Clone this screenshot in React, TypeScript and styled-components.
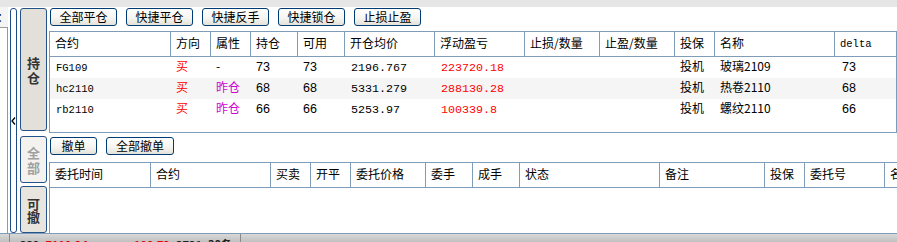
import React from 'react';
import styled, { createGlobalStyle } from 'styled-components';

const GlobalStyle = createGlobalStyle`
  html, body { margin: 0; padding: 0; background: #fff; overflow: hidden; }
  body {
    font-family: "Noto Sans CJK SC", "Liberation Sans", sans-serif;
    font-size: 12px;
    color: #000;
  }
`;

const CJK = `"Noto Sans CJK SC", "Liberation Sans", sans-serif`;
const MONO = `"Liberation Mono", "Noto Sans CJK SC", monospace`;
const SANS = `"Liberation Sans", "Noto Sans CJK SC", sans-serif`;
const GRID = '#7f9db9';

const Screen = styled.div`
  width: 897px;
  height: 242px;
  display: flex;
  flex-direction: column;
  overflow: hidden;
`;

const TopBand = styled.div`
  flex: none;
  height: 7px;
  background: #e6e6e6;
`;

const Body = styled.div`
  flex: none;
  height: 226px;
  display: flex;
`;

const LeftPanel = styled.div`
  flex: none;
  width: 8px;
  display: flex;
  flex-direction: column;
  overflow: hidden;
`;

const LeftLabel = styled.div`
  height: 20px;
  background: #f4f4f4;
  font-size: 12px;
  line-height: 20px;
  margin-left: -3px;
  white-space: nowrap;
`;

const LeftBox = styled.div`
  flex: 1;
  background: #fff;
  border-top: 1px solid #9a9a9a;
  border-right: 1px solid ${GRID};
`;

const Handle = styled.div`
  flex: none;
  width: 5px;
  margin: 1px 0 0 2px;
  height: 223px;
  border: 1px solid #1d4c86;
  border-radius: 3px;
  background: #fff;
  display: flex;
  align-items: center;
  justify-content: center;
`;

const Tabs = styled.div`
  flex: none;
  width: 27px;
  margin-left: 3px;
  padding-top: 1px;
  display: flex;
  flex-direction: column;
`;

const Tab = styled.div<{ $h: number; $gap: number; $bg: string; $fg: string }>`
  box-sizing: border-box;
  height: ${(p) => p.$h}px;
  margin-top: ${(p) => p.$gap}px;
  border: 1px solid #24528a;
  border-radius: 3px;
  background: ${(p) => p.$bg};
  color: ${(p) => p.$fg};
  display: flex;
  align-items: center;
  justify-content: center;
`;

const TabLabel = styled.span<{ $lh: number }>`
  width: 14px;
  font-family: ${CJK};
  font-weight: bold;
  font-size: 13px;
  line-height: ${(p) => p.$lh}px;
  text-align: center;
  word-break: break-all;
`;

const Main = styled.div`
  flex: 1;
  min-width: 0;
  overflow: hidden;
  display: flex;
  flex-direction: column;
`;

const ButtonRow = styled.div<{ $top: number }>`
  display: flex;
  gap: 9px;
  margin: ${(p) => p.$top}px 0 0 3px;
  height: 18px;
`;

const Btn = styled.div<{ $w: number }>`
  box-sizing: border-box;
  width: ${(p) => p.$w}px;
  height: 18px;
  border: 1px solid #003c74;
  border-radius: 3px;
  background: linear-gradient(#ffffff 0%, #f6f5f1 55%, #e4e2d9 100%);
  font-family: ${CJK};
  font-size: 12px;
  line-height: 15px;
  text-align: center;
  color: #000;
`;

const Panel = styled.div<{ $top: number; $h: number; $w: number; $bottom: boolean; $right: boolean }>`
  box-sizing: border-box;
  flex: none;
  margin: ${(p) => p.$top}px 0 0 2px;
  width: ${(p) => p.$w}px;
  height: ${(p) => p.$h}px;
  border-top: 1px solid ${GRID};
  border-left: 1px solid ${GRID};
  border-right: ${(p) => (p.$right ? `1px solid ${GRID}` : 'none')};
  border-bottom: ${(p) => (p.$bottom ? `1px solid ${GRID}` : 'none')};
  background: #fff;
`;

const Row = styled.div<{ $cols: string; $h: number; $alt?: boolean; $head?: boolean }>`
  display: grid;
  grid-template-columns: ${(p) => p.$cols};
  height: ${(p) => p.$h}px;
  background: ${(p) => (p.$alt ? '#f5f5f5' : '#fff')};
  border-bottom: ${(p) => (p.$head ? `1px solid ${GRID}` : 'none')};
`;

const HeadCell = styled.div<{ $last?: boolean; $mono?: boolean }>`
  box-sizing: border-box;
  border-right: ${(p) => (p.$last ? 'none' : `1px solid ${GRID}`)};
  padding: 0 0 ${(p) => (p.$mono ? 0 : 2)}px 5px;
  display: flex;
  align-items: center;
  font-family: ${(p) => (p.$mono ? MONO : CJK)};
  font-size: ${(p) => (p.$mono ? '10.5px' : '12px')};
  line-height: 14px;
  white-space: nowrap;
  overflow: hidden;
`;

type Kind = 'code' | 'num' | 'dec' | 'cjk';

const Cell = styled.div<{ $kind: Kind; $color?: string; $pad?: number }>`
  box-sizing: border-box;
  padding-left: ${(p) => p.$pad ?? 5}px;
  padding-bottom: ${(p) => (p.$kind === 'cjk' ? 3 : p.$kind === 'num' ? 1 : 0)}px;
  display: flex;
  align-items: center;
  line-height: 14px;
  white-space: nowrap;
  overflow: hidden;
  color: ${(p) => p.$color || '#000'};
  font-family: ${(p) =>
    p.$kind === 'code' ? MONO : p.$kind === 'dec' ? MONO : p.$kind === 'num' ? SANS : CJK};
  font-size: ${(p) =>
    p.$kind === 'code' ? '10.5px' : p.$kind === 'dec' ? '11.7px' : p.$kind === 'num' ? '12.5px' : '12px'};
`;

const StatusBar = styled.div`
  flex: none;
  height: 9px;
  border-top: 1px solid ${GRID};
  background: linear-gradient(#d8d8d8, #bdbdbd);
  display: flex;
  align-items: flex-start;
  overflow: hidden;
`;

const StatusSep = styled.div<{ $left: number }>`
  flex: none;
  width: 1px;
  height: 9px;
  margin-left: ${(p) => p.$left}px;
  background: #8a8a8a;
`;

const StatusText = styled.span<{ $left: number; $red?: boolean }>`
  flex: none;
  margin-left: ${(p) => p.$left}px;
  margin-top: 3px;
  font-family: ${CJK};
  font-weight: bold;
  font-size: 11px;
  line-height: 14px;
  color: ${(p) => (p.$red ? '#e00000' : '#222')};
`;

const UPPER_COLS = '121px 40px 40px 47px 47px 90px 90px 75px 75px 40px 120px 1fr';
const LOWER_COLS = '101px 120px 40px 40px 75px 47px 47px 140px 105px 40px 80px 80px';

const upperHeads = ['合约', '方向', '属性', '持仓', '可用', '开仓均价', '浮动盈亏', '止损/数量', '止盈/数量', '投保', '名称', 'delta'];
const lowerHeads = ['委托时间', '合约', '买卖', '开平', '委托价格', '委手', '成手', '状态', '备注', '投保', '委托号', '名称'];

const positions = [
  { code: 'FG109', dir: '买', attr: '-', hold: '73', avail: '73', price: '2196.767', pnl: '223720.18', hedge: '投机', name: '玻璃2109', delta: '73' },
  { code: 'hc2110', dir: '买', attr: '昨仓', hold: '68', avail: '68', price: '5331.279', pnl: '288130.28', hedge: '投机', name: '热卷2110', delta: '68' },
  { code: 'rb2110', dir: '买', attr: '昨仓', hold: '66', avail: '66', price: '5253.97', pnl: '100339.8', hedge: '投机', name: '螺纹2110', delta: '66' },
];

export default function App() {
  return (
    <>
      <GlobalStyle />
      <Screen>
        <TopBand />
        <Body>
          <LeftPanel>
            <LeftLabel>：</LeftLabel>
            <LeftBox />
          </LeftPanel>
          <Handle>
            <svg width="5" height="8" viewBox="0 0 5 8">
              <path d="M4 0.5 L1 4 L4 7.5" fill="none" stroke="#000" strokeWidth="1.3" />
            </svg>
          </Handle>
          <Tabs>
            <Tab $h={124} $gap={0} $bg="#e2e0d9" $fg="#333">
              <TabLabel $lh={15}>持仓</TabLabel>
            </Tab>
            <Tab $h={47} $gap={5} $bg="#f3f2ee" $fg="#a0a0a0">
              <TabLabel $lh={15}>全部</TabLabel>
            </Tab>
            <Tab $h={47} $gap={3} $bg="#e7e5de" $fg="#333">
              <TabLabel $lh={13}>可撤</TabLabel>
            </Tab>
          </Tabs>
          <Main>
            <ButtonRow $top={1}>
              <Btn $w={67}>全部平仓</Btn>
              <Btn $w={67}>快捷平仓</Btn>
              <Btn $w={67}>快捷反手</Btn>
              <Btn $w={67}>快捷锁仓</Btn>
              <Btn $w={67}>止损止盈</Btn>
            </ButtonRow>
            <Panel $top={5} $h={102} $w={848} $bottom $right>
              <Row $cols={UPPER_COLS} $h={24} $head>
                {upperHeads.map((h, i) => (
                  <HeadCell key={h} $last={i === upperHeads.length - 1} $mono={h === 'delta'}>
                    {h}
                  </HeadCell>
                ))}
              </Row>
              {positions.map((r, i) => (
                <Row key={r.code} $cols={UPPER_COLS} $h={21} $alt={i === 1}>
                  <Cell $kind="code" $pad={6}>{r.code}</Cell>
                  <Cell $kind="cjk" $color="#ff0000">{r.dir}</Cell>
                  <Cell $kind="cjk" $color={r.attr === '-' ? '#000' : '#d000d0'}>{r.attr}</Cell>
                  <Cell $kind="num">{r.hold}</Cell>
                  <Cell $kind="num">{r.avail}</Cell>
                  <Cell $kind="dec" $pad={6}>{r.price}</Cell>
                  <Cell $kind="dec" $pad={6} $color="#ff0000">{r.pnl}</Cell>
                  <Cell $kind="cjk" />
                  <Cell $kind="cjk" />
                  <Cell $kind="cjk">{r.hedge}</Cell>
                  <Cell $kind="cjk">{r.name}</Cell>
                  <Cell $kind="num" $pad={7}>{r.delta}</Cell>
                </Row>
              ))}
            </Panel>
            <ButtonRow $top={4}>
              <Btn $w={47}>撤单</Btn>
              <Btn $w={68}>全部撤单</Btn>
            </ButtonRow>
            <Panel $top={7} $h={71} $w={960} $bottom={false} $right={false}>
              <Row $cols={LOWER_COLS} $h={24} $head>
                {lowerHeads.map((h, i) => (
                  <HeadCell key={h + i} $last={i === lowerHeads.length - 1}>
                    {h}
                  </HeadCell>
                ))}
              </Row>
            </Panel>
          </Main>
        </Body>
        <StatusBar>
          <StatusSep $left={9} />
          <StatusText $left={10}>332</StatusText>
          <StatusText $left={6} $red>7119.24</StatusText>
          <StatusText $left={12}>··</StatusText>
          <StatusText $left={12} $red>100.72</StatusText>
          <StatusText $left={6}>3731</StatusText>
          <StatusText $left={6}>30条</StatusText>
          <StatusSep $left={8} />
        </StatusBar>
      </Screen>
    </>
  );
}
